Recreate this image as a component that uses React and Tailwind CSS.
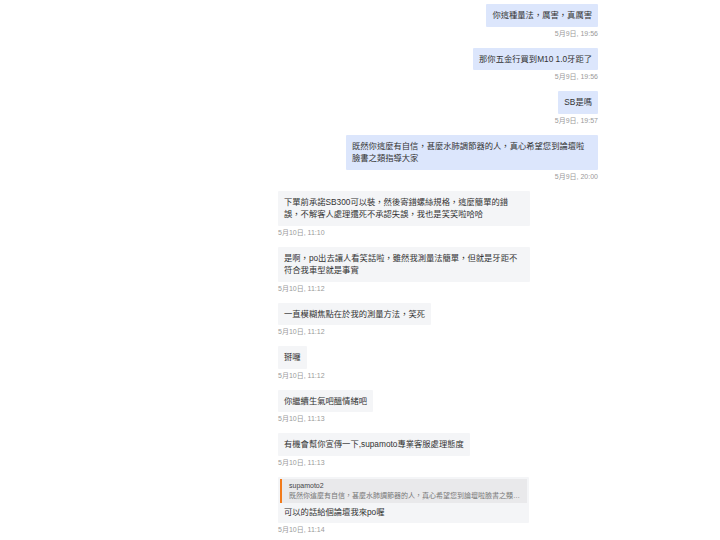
import React from "react";

const messages = [
  { me: true, text: "你這種量法，厲害，真厲害", time: "5月9日, 19:56" },
  { me: true, text: "那你五金行買到M10 1.0牙距了", time: "5月9日, 19:56" },
  { me: true, text: "SB是嗎", time: "5月9日, 19:57" },
  {
    me: true,
    text: "既然你這麼有自信，甚麼水肺調節器的人，真心希望您到論壇啦臉書之類指導大家",
    time: "5月9日, 20:00",
  },
  {
    me: false,
    text: "下單前承諾SB300可以裝，然後寄錯螺絲規格，這麼簡單的錯誤，不解客人處理還死不承認失誤，我也是笑笑啦哈哈",
    time: "5月10日, 11:10",
  },
  {
    me: false,
    text: "是啊，po出去讓人看笑話啦，雖然我測量法簡單，但就是牙距不符合我車型就是事實",
    time: "5月10日, 11:12",
  },
  { me: false, text: "一直模糊焦點在於我的測量方法，笑死", time: "5月10日, 11:12" },
  { me: false, text: "掰囉", time: "5月10日, 11:12" },
  { me: false, text: "你繼續生氣吧醞情緒吧", time: "5月10日, 11:13" },
  {
    me: false,
    text: "有機會幫你宣傳一下,supamoto專業客服處理態度",
    time: "5月10日, 11:13",
  },
  {
    me: false,
    text: "可以的話給個論壇我來po喔",
    time: "5月10日, 11:14",
    reply: {
      name: "supamoto2",
      text: "既然你這麼有自信，甚麼水肺調節器的人，真心希望您到論壇啦臉書之類指導大家",
    },
  },
];

function Bubble({ msg }) {
  const base = "max-w-[252px] rounded-[1px] text-[8.3px] leading-[12.5px] text-[#333]";
  if (msg.reply) {
    return (
      <div className={`${base} w-[251px] bg-[#f4f5f7] p-[2px] pb-[5px]`}>
        <div className="border-l-2 border-[#f27a1a] bg-[#e9e9eb] py-[2px] pl-[7px] pr-[4px]">
          <div className="text-[7px] leading-[10px] text-[#444]">{msg.reply.name}</div>
          <div className="truncate text-[7px] leading-[10px] text-[#777]">{msg.reply.text}</div>
        </div>
        <div className="mt-[3px] px-[4px]">{msg.text}</div>
      </div>
    );
  }
  return (
    <div className={`${base} px-[6px] py-[5px] ${msg.me ? "bg-[#dce6fc]" : "bg-[#f4f5f7]"}`}>
      {msg.text}
    </div>
  );
}

export default function App() {
  return (
    <div className="min-h-[540px] bg-white font-['Liberation_Sans','Noto_Sans_CJK_TC',sans-serif]">
      <div className="ml-[278px] flex w-[320px] flex-col gap-[9px] pt-[4px]">
        {messages.map((m, i) => (
          <div key={i} className={`flex flex-col ${m.me ? "items-end" : "items-start"}`}>
            <Bubble msg={m} />
            <div className="mt-[2px] text-[7px] leading-[10px] text-[#9a9a9a]">{m.time}</div>
          </div>
        ))}
      </div>
    </div>
  );
}
